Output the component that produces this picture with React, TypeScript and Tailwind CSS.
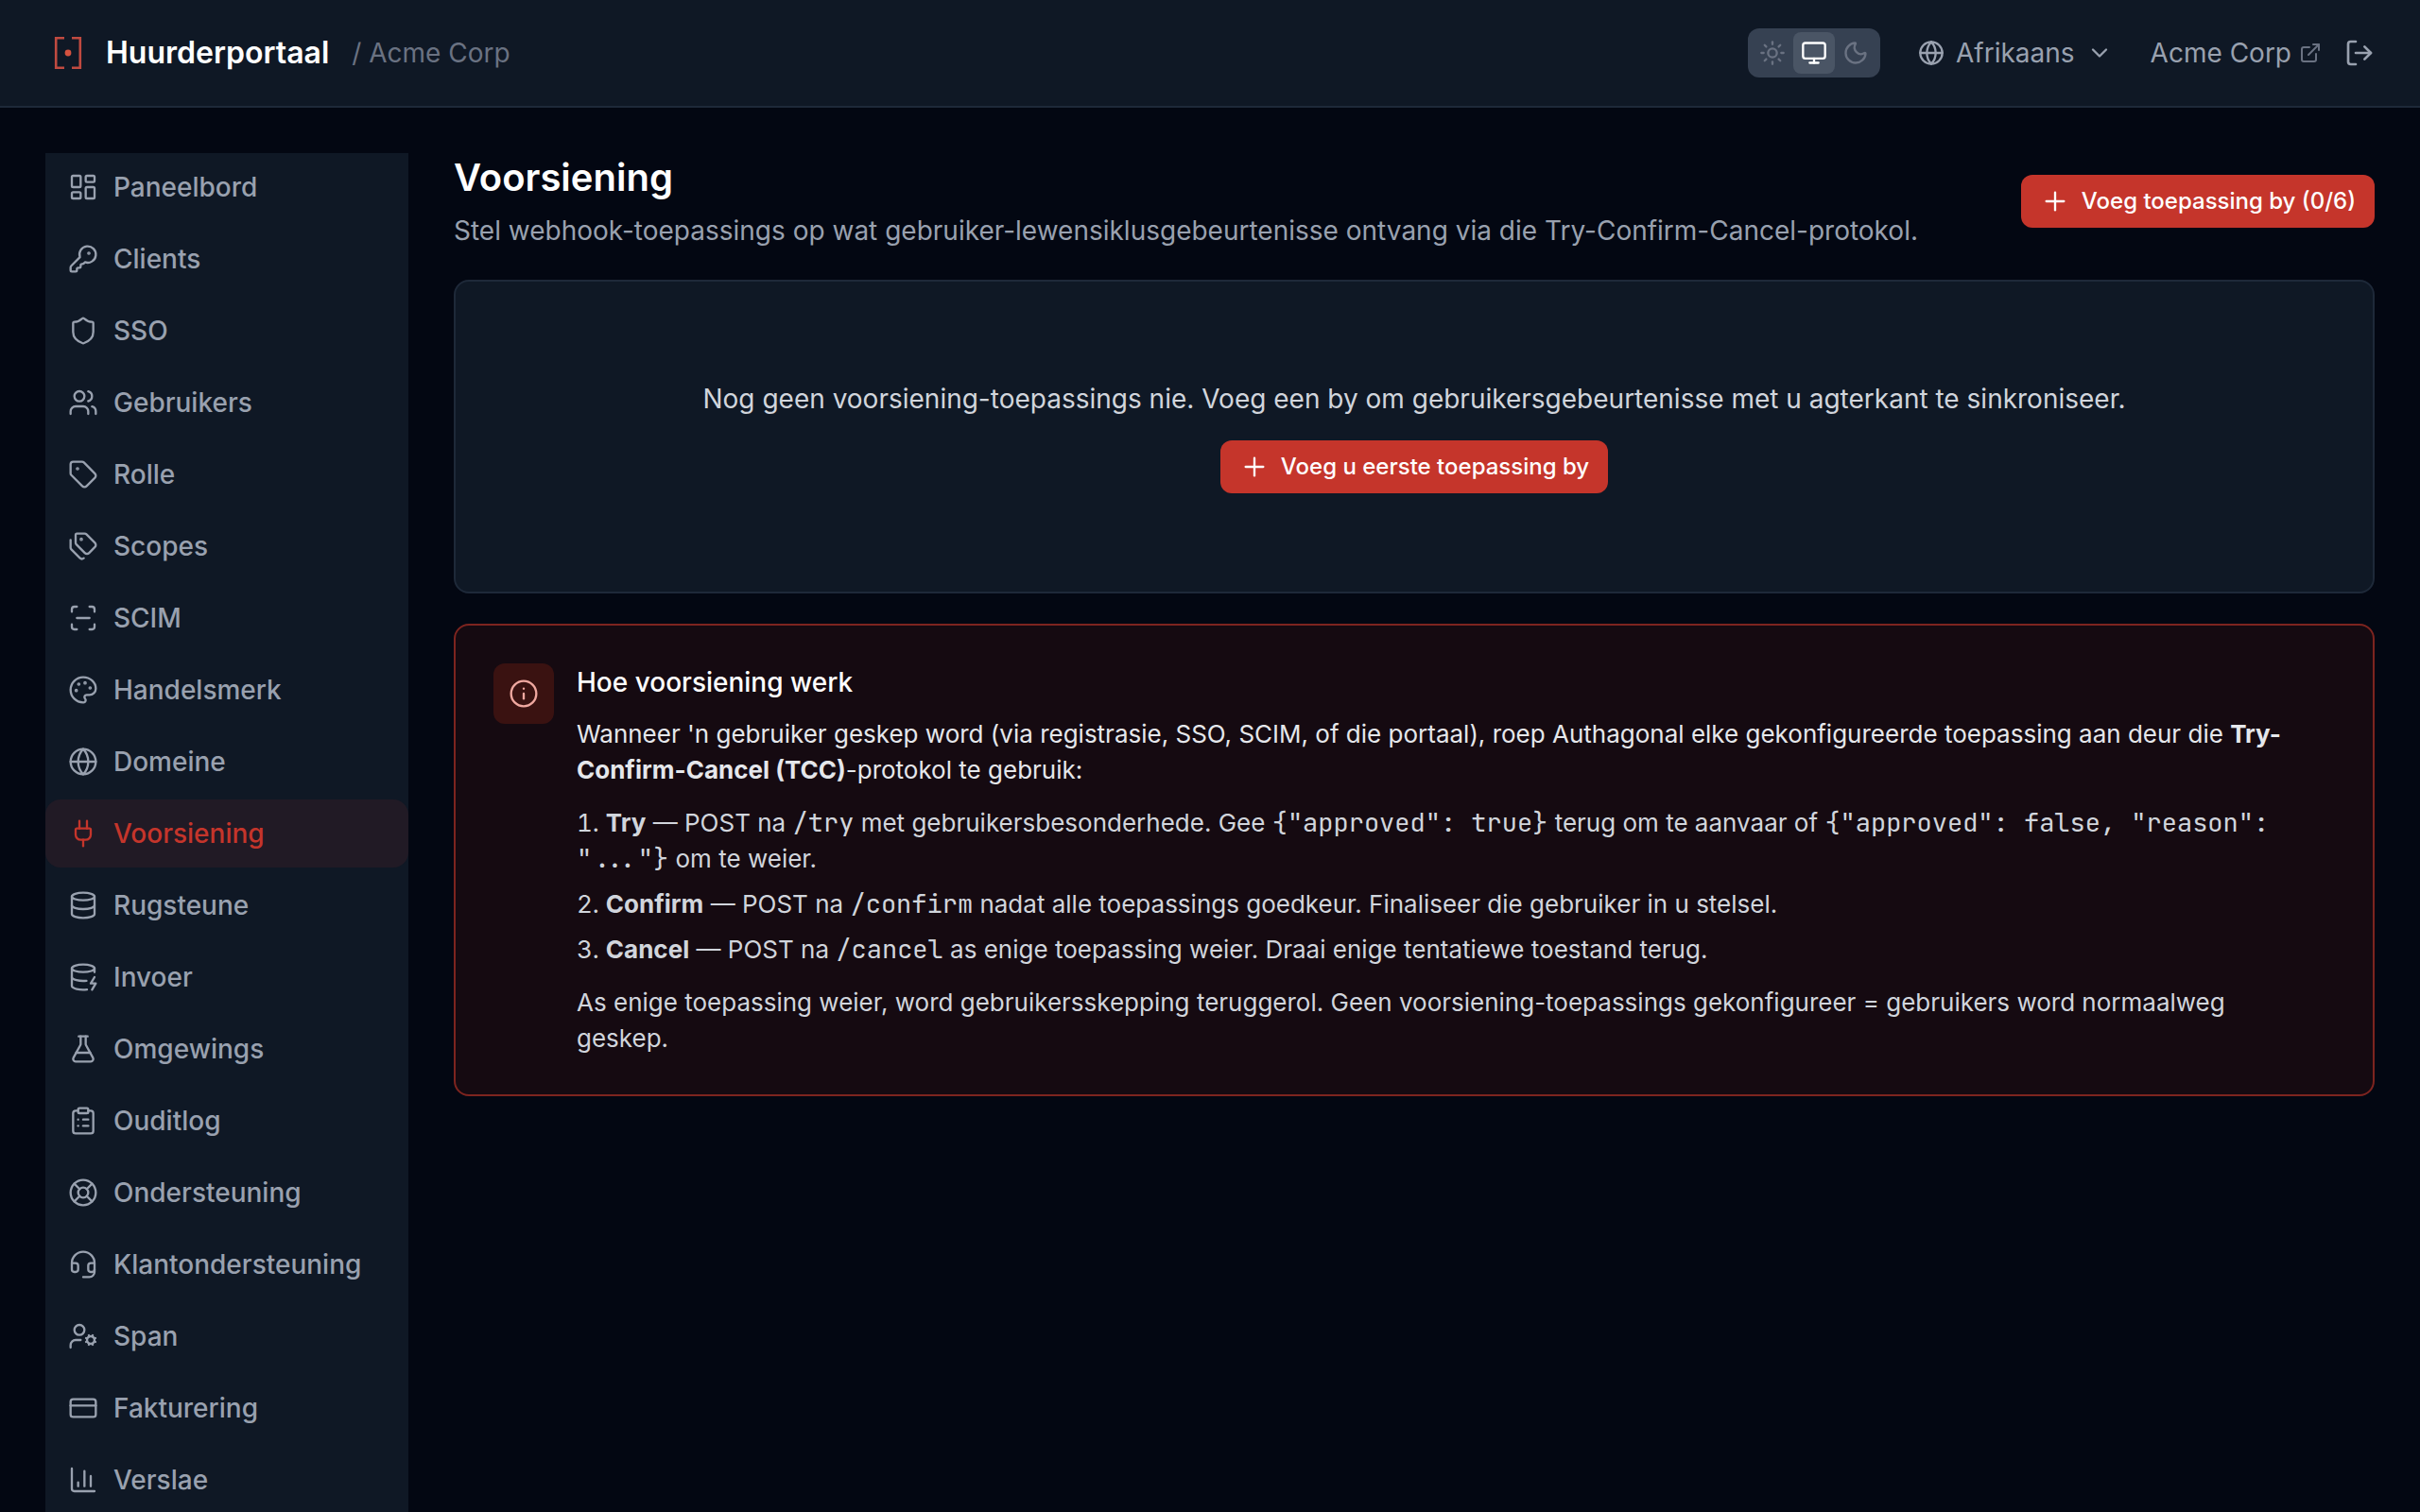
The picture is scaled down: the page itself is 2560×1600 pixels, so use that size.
import React from "react";
import {
  ChartColumn,
  ChevronDown,
  ClipboardList,
  CreditCard,
  Database,
  DatabaseZap,
  ExternalLink,
  FlaskConical,
  Globe,
  Headset,
  Info,
  KeyRound,
  LayoutDashboard,
  LifeBuoy,
  LogOut,
  Monitor,
  Moon,
  Palette,
  Plug,
  Plus,
  ScanLine,
  Shield,
  Sun,
  Tag,
  Tags,
  UserCog,
  Users,
} from "lucide-react";

const navItems = [
  { label: "Paneelbord", icon: LayoutDashboard },
  { label: "Clients", icon: KeyRound },
  { label: "SSO", icon: Shield },
  { label: "Gebruikers", icon: Users },
  { label: "Rolle", icon: Tag },
  { label: "Scopes", icon: Tags },
  { label: "SCIM", icon: ScanLine },
  { label: "Handelsmerk", icon: Palette },
  { label: "Domeine", icon: Globe },
  { label: "Voorsiening", icon: Plug, active: true },
  { label: "Rugsteune", icon: Database },
  { label: "Invoer", icon: DatabaseZap },
  { label: "Omgewings", icon: FlaskConical },
  { label: "Ouditlog", icon: ClipboardList },
  { label: "Ondersteuning", icon: LifeBuoy },
  { label: "Klantondersteuning", icon: Headset },
  { label: "Span", icon: UserCog },
  { label: "Fakturering", icon: CreditCard },
  { label: "Verslae", icon: ChartColumn },
];

function Logo() {
  return (
    <svg viewBox="0 0 48 48" className="size-12" fill="none" aria-hidden="true">
      <path
        d="M20 8.200h-8.800v31.600H20M28 8.200h8.800v31.600H28"
        stroke="#c04a40"
        strokeWidth="2.600"
      />
      <circle cx="24" cy="24" r="3.400" fill="#d4523f" />
    </svg>
  );
}

function ThemeSwitch() {
  return (
    <div className="flex rounded-xl bg-[#364152] p-1">
      <button
        aria-label="Light"
        className="flex size-11 items-center justify-center rounded-lg text-gray-500"
      >
        <Sun className="size-7" />
      </button>
      <button
        aria-label="System"
        className="flex size-11 items-center justify-center rounded-lg bg-gray-600 text-white"
      >
        <Monitor className="size-7" />
      </button>
      <button
        aria-label="Dark"
        className="flex size-11 items-center justify-center rounded-lg text-gray-500"
      >
        <Moon className="size-7" />
      </button>
    </div>
  );
}

function Header() {
  return (
    <header className="flex h-[114px] shrink-0 items-center justify-between border-b-2 border-gray-800 bg-[#0f1825] px-12">
      <div className="flex items-center">
        <Logo />
        <span className="ml-4 text-[32px] font-semibold text-white">
          Huurderportaal
        </span>
        <span className="ml-6 text-[28px] text-gray-500">/ Acme Corp</span>
      </div>
      <div className="flex items-center text-[28px] text-gray-400">
        <ThemeSwitch />
        <label className="ml-10 flex items-center gap-3">
          <Globe className="size-7" />
          <select
            aria-label="Taal"
            className="field-sizing-content appearance-none bg-transparent outline-none"
            defaultValue="af"
          >
            <option value="af">Afrikaans</option>
          </select>
          <ChevronDown className="size-7" />
        </label>
        <a href="#" className="ml-10 flex items-center gap-2">
          Acme Corp
          <ExternalLink className="size-6 text-gray-500" />
        </a>
        <button aria-label="Teken uit" className="ml-6">
          <LogOut className="size-8" />
        </button>
      </div>
    </header>
  );
}

function Sidebar() {
  return (
    <aside className="w-96 shrink-0 overflow-y-auto bg-[#0f1825] [scrollbar-width:none]">
      <nav className="flex flex-col gap-1">
        {navItems.map(({ label, icon: Icon, active }) => (
          <a
            key={label}
            href="#"
            className={
              active
                ? "flex h-18 shrink-0 items-center gap-4 rounded-2xl bg-[#c5352b]/10 px-6 text-[28px] font-medium text-[#c5352b]"
                : "flex h-18 shrink-0 items-center gap-4 rounded-2xl px-6 text-[28px] font-medium text-gray-400"
            }
          >
            <Icon className="size-8" strokeWidth={1.75} />
            {label}
          </a>
        ))}
      </nav>
    </aside>
  );
}

function AddButton({ children }: { children: React.ReactNode }) {
  return (
    <button className="flex h-14 items-center gap-3 rounded-xl bg-[#c5352b] px-5 text-2xl font-medium text-white">
      <Plus className="size-8" strokeWidth={1.75} />
      {children}
    </button>
  );
}

function InfoCard() {
  return (
    <section className="mt-8 flex gap-6 rounded-2xl border-2 border-[#7d241f] bg-[#150a11] p-10">
      <div className="flex size-16 shrink-0 items-center justify-center rounded-xl bg-[#3a1211] text-[#f0a8a0]">
        <Info className="size-8" strokeWidth={1.75} />
      </div>
      <div className="pr-6 text-[26px] leading-[38px] text-gray-300">
        <h2 className="text-[28px] leading-10 font-medium text-white">
          Hoe voorsiening werk
        </h2>
        <p className="mt-4 text-gray-200">
          Wanneer 'n gebruiker geskep word (via registrasie, SSO, SCIM, of die
          portaal), roep Authagonal elke gekonfigureerde toepassing aan deur die{" "}
          <strong>Try-Confirm-Cancel (TCC)</strong>-protokol te gebruik:
        </p>
        <ol className="mt-[18px] list-inside list-decimal space-y-2.5 [&_code]:font-['JetBrains_Mono','DejaVu_Sans_Mono',monospace] [&_code]:text-[27px] [&_code]:leading-none">
          <li>
            <strong>Try</strong> — POST na <code>/try</code> met
            gebruikersbesonderhede. Gee <code>{'{"approved": true}'}</code>{" "}
            terug om te aanvaar of{" "}
            <code>{'{"approved": false, "reason": "..."}'}</code> om te weier.
          </li>
          <li>
            <strong>Confirm</strong> — POST na <code>/confirm</code> nadat alle
            toepassings goedkeur. Finaliseer die gebruiker in u stelsel.
          </li>
          <li>
            <strong>Cancel</strong> — POST na <code>/cancel</code> as enige
            toepassing weier. Draai enige tentatiewe toestand terug.
          </li>
        </ol>
        <p className="mt-[18px]">
          As enige toepassing weier, word gebruikersskepping teruggerol. Geen
          voorsiening-toepassings gekonfigureer = gebruikers word normaalweg
          geskep.
        </p>
      </div>
    </section>
  );
}

function App() {
  return (
    <div className="flex h-screen flex-col overflow-hidden bg-gray-950 font-['Inter',sans-serif]">
      <Header />
      <div className="flex min-h-0 flex-1 gap-12 px-12 pt-12">
        <Sidebar />
        <main className="min-w-0 flex-1">
          <div className="flex items-center justify-between">
            <div>
              <h1 className="text-[40px] leading-[52px] font-semibold text-white">
                Voorsiening
              </h1>
              <p className="mt-2.5 text-[28px] leading-10 text-gray-400">
                Stel webhook-toepassings op wat gebruiker-lewensiklusgebeurtenisse
                ontvang via die Try-Confirm-Cancel-protokol.
              </p>
            </div>
            <AddButton>Voeg toepassing by (0/6)</AddButton>
          </div>
          <section className="mt-8 flex flex-col items-center gap-6 rounded-2xl border-2 border-gray-800 bg-[#0f1825] py-26">
            <p className="text-[28px] leading-10 text-gray-300">
              Nog geen voorsiening-toepassings nie. Voeg een by om
              gebruikersgebeurtenisse met u agterkant te sinkroniseer.
            </p>
            <AddButton>Voeg u eerste toepassing by</AddButton>
          </section>
          <InfoCard />
        </main>
      </div>
    </div>
  );
}

export default App;
